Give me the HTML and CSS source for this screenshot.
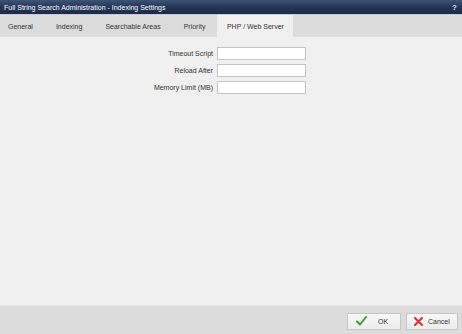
FILE: index.html
```html
<!DOCTYPE html>
<html>
<head>
<meta charset="UTF-8">
<title>Indexing Settings</title>
<link rel="stylesheet" href="styles.css">
</head>
<body>
	<div class="window">
		<div class="titlebar">
			<span class="title">Full String Search Administration - Indexing Settings</span>
			<span class="help">?</span>
		</div>
		<div class="tabs">
			<div class="tab">General</div>
			<div class="tab">Indexing</div>
			<div class="tab">Searchable Areas</div>
			<div class="tab">Priority</div>
			<div class="tab active">PHP / Web Server</div>
		</div>
		<div class="content">
			<div class="row">
				<label>Timeout Script</label>
				<input type="text">
			</div>
			<div class="row">
				<label>Reload After</label>
				<input type="text">
			</div>
			<div class="row">
				<label>Memory Limit (MB)</label>
				<input type="text">
			</div>
		</div>
		<div class="footer">
			<button class="btn ok">
				<svg width="11" height="10" viewBox="0 0 11 10"><path d="M1 5.5 L4 8.5 L10 1" fill="none" stroke="#3a9c34" stroke-width="2" stroke-linecap="round" stroke-linejoin="round"/></svg>
				OK
			</button>
			<button class="btn cancel">
				<svg width="9" height="9" viewBox="0 0 9 9"><path d="M1 1 L8 8 M8 1 L1 8" fill="none" stroke="#dc2b2b" stroke-width="1.9" stroke-linecap="round"/></svg>
				Cancel
			</button>
		</div>
	</div>
</body>
</html>
```
FILE: styles.css
```css
html, body {
	margin: 0;
	padding: 0;
}
body {
	font-family: "Liberation Sans", Arial, sans-serif;
	font-size: 7px;
	color: #333;
	background: #f0f0f0;
}
.window {
	width: 462px;
	height: 334px;
	display: flex;
	flex-direction: column;
}
.titlebar {
	height: 14px;
	background: linear-gradient(to bottom, #3e5378 0%, #243558 50%, #1b2a4a 100%);
	color: #fff;
	display: flex;
	align-items: center;
	justify-content: space-between;
	padding: 0 4px;
}
.help {
	font-weight: bold;
	font-size: 8px;
	color: #dfe6f2;
	padding-right: 1px;
}
.tabs {
	height: 22px;
	background: #dcdcdc;
	display: flex;
	border-top: 1px solid #c8ccd4;
	padding-left: 0;
}
.tab {
	padding: 0 11.5px;
	display: flex;
	align-items: center;
	color: #333;
}
.tab:first-child {
	padding-left: 8px;
}
.tab.active {
	background: #f0f0f0;
	padding: 0 9px 0 10px;
}
.content {
	flex: 1;
	background: #f0f0f0;
	padding-top: 10px;
	display: flex;
	flex-direction: column;
	gap: 4px;
}
.row {
	display: flex;
	align-items: center;
}
.row label {
	width: 217px;
	text-align: right;
	padding-right: 4px;
	box-sizing: border-box;
	color: #333;
}
.row input {
	width: 89px;
	height: 13px;
	box-sizing: border-box;
	border: 1px solid #c4c4c4;
	background: #fff;
	margin: 0;
	padding: 0 2px;
}
.footer {
	height: 29px;
	background: #dcdcdc;
	border-top: 1px solid #e6e6e6;
	box-sizing: border-box;
	display: flex;
	align-items: center;
	justify-content: flex-end;
	gap: 5px;
	padding: 0 4px 0 0;
}
.btn {
	height: 17px;
	display: flex;
	align-items: center;
	font-family: "Liberation Sans", Arial, sans-serif;
	font-size: 7px;
	color: #333;
	background: linear-gradient(to bottom, #f8f8f8 0%, #ececec 100%);
	border: 1px solid #c6c6c6;
	margin-top: 2px;
	box-sizing: border-box;
}
.ok {
	width: 54px;
	padding: 0 0 0 8px;
	gap: 11px;
}
.cancel {
	width: 52px;
	padding: 0 0 0 7px;
	gap: 5px;
}
```
